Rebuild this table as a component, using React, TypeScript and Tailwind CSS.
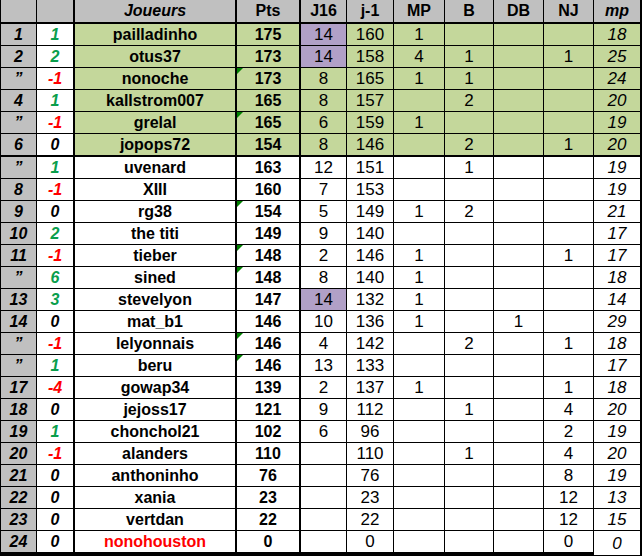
import React from "react";

type Row = {
  rank: string;
  delta: string;
  name: string;
  pts: string;
  j16: string;
  j1: string;
  mpc: string;
  b: string;
  db: string;
  nj: string;
  mp: string;
  purple?: boolean;
  mark?: boolean;
  red?: boolean;
};

const r = (
  rank: string,
  delta: string,
  name: string,
  pts: string,
  j16: string,
  j1: string,
  mpc: string,
  b: string,
  db: string,
  nj: string,
  mp: string,
  extra: Partial<Row> = {}
): Row => ({ rank, delta, name, pts, j16, j1, mpc, b, db, nj, mp, ...extra });

const rows: Row[] = [
  r("1", "1", "pailladinho", "175", "14", "160", "1", "", "", "", "18", { purple: true }),
  r("2", "2", "otus37", "173", "14", "158", "4", "1", "", "1", "25", { purple: true }),
  r("\u201D", "-1", "nonoche", "173", "8", "165", "1", "1", "", "", "24", { mark: true }),
  r("4", "1", "kallstrom007", "165", "8", "157", "", "2", "", "", "20"),
  r("\u201D", "-1", "grelal", "165", "6", "159", "1", "", "", "", "19", { mark: true }),
  r("6", "0", "jopops72", "154", "8", "146", "", "2", "", "1", "20"),
  r("\u201D", "1", "uvenard", "163", "12", "151", "", "1", "", "", "19"),
  r("8", "-1", "XIII", "160", "7", "153", "", "", "", "", "19"),
  r("9", "0", "rg38", "154", "5", "149", "1", "2", "", "", "21", { mark: true }),
  r("10", "2", "the titi", "149", "9", "140", "", "", "", "", "17"),
  r("11", "-1", "tieber", "148", "2", "146", "1", "", "", "1", "17", { mark: true }),
  r("\u201D", "6", "sined", "148", "8", "140", "1", "", "", "", "18", { mark: true }),
  r("13", "3", "stevelyon", "147", "14", "132", "1", "", "", "", "14", { purple: true }),
  r("14", "0", "mat_b1", "146", "10", "136", "1", "", "1", "", "29"),
  r("\u201D", "-1", "lelyonnais", "146", "4", "142", "", "2", "", "1", "18", { mark: true }),
  r("\u201D", "1", "beru", "146", "13", "133", "", "", "", "", "17", { mark: true }),
  r("17", "-4", "gowap34", "139", "2", "137", "1", "", "", "1", "18"),
  r("18", "0", "jejoss17", "121", "9", "112", "", "1", "", "4", "20"),
  r("19", "1", "chonchol21", "102", "6", "96", "", "", "", "2", "19"),
  r("20", "-1", "alanders", "110", "", "110", "", "1", "", "4", "20"),
  r("21", "0", "anthoninho", "76", "", "76", "", "", "", "8", "19"),
  r("22", "0", "xania", "23", "", "23", "", "", "", "12", "13"),
  r("23", "0", "vertdan", "22", "", "22", "", "", "", "12", "15"),
  r("24", "0", "nonohouston", "0", "", "0", "", "", "", "0", "0", { red: true }),
];

const font = { fontFamily: '"Liberation Sans", Arial, sans-serif' };

function deltaColor(d: string) {
  if (d.startsWith("-")) return "text-[#ff0000]";
  if (d === "0") return "text-black";
  return "text-[#0a9e4c]";
}

export default function App() {
  return (
    <div className="w-[642px] h-[557px] bg-white overflow-hidden" style={font}>
      <div className="grid grid-cols-[36px_38px_162px_64px_46px_47px_51px_49px_50px_50px_48px] border-l border-black text-[16px] leading-none text-black">
        {/* header */}
        <div className="h-[24px] bg-[#c0c0c0] border-r border-b-2 border-black" />
        <div className="h-[24px] bg-[#c0c0c0] border-r-2 border-b-2 border-black" />
        <div className="h-[24px] bg-[#c0c0c0] border-r-2 border-b-2 border-black flex items-center justify-center font-bold italic">Joueurs</div>
        <div className="h-[24px] bg-[#c0c0c0] border-r-2 border-b-2 border-black flex items-center justify-center font-bold">Pts</div>
        <div className="h-[24px] bg-[#c0c0c0] border-r border-b-2 border-black flex items-center justify-center font-bold">J16</div>
        <div className="h-[24px] bg-[#c0c0c0] border-r border-b-2 border-black flex items-center justify-center font-bold">j-1</div>
        <div className="h-[24px] bg-[#c0c0c0] border-r border-b-2 border-black flex items-center justify-center font-bold">MP</div>
        <div className="h-[24px] bg-[#c0c0c0] border-r border-b-2 border-black flex items-center justify-center font-bold">B</div>
        <div className="h-[24px] bg-[#c0c0c0] border-r border-b-2 border-black flex items-center justify-center font-bold">DB</div>
        <div className="h-[24px] bg-[#c0c0c0] border-r border-b-2 border-black flex items-center justify-center font-bold">NJ</div>
        <div className="h-[24px] bg-[#c0c0c0] border-r-2 border-b-2 border-black flex items-center justify-center font-bold italic">mp</div>

        {rows.map((row, i) => {
          const top = i < 6;
          const sixth = i === 5;
          const last = i === rows.length - 1;
          const rowH = sixth ? "h-[23px] border-b-2" : last ? "h-[25px] border-b-4" : "h-[22px] border-b";
          const bg = top ? "bg-[#c4d79b]" : "bg-white";
          const base = `${rowH} border-black flex items-center justify-center`;
          const num = "text-[17px]";
          return (
            <React.Fragment key={i}>
              <div className={`${base} border-r bg-[#c0c0c0] font-bold italic`}>{row.rank}</div>
              <div className={`${base} border-r-2 bg-white font-bold italic ${deltaColor(row.delta)}`}>{row.delta}</div>
              <div className={`${base} border-r-2 ${bg} font-bold ${row.red ? "text-[#ff0000]" : ""}`}>{row.name}</div>
              <div className={`${base} border-r-2 ${bg} font-bold relative`}>
                {row.mark && (
                  <span className="absolute top-0 left-0 w-0 h-0 border-t-[6px] border-r-[6px] border-t-[#008000] border-r-transparent" />
                )}
                {row.pts}
              </div>
              <div className={`${base} ${num} border-r ${row.purple ? "bg-[#b1a0c7]" : bg}`}>{row.j16}</div>
              <div className={`${base} ${num} border-r ${bg}`}>{row.j1}</div>
              <div className={`${base} ${num} border-r ${bg}`}>{row.mpc}</div>
              <div className={`${base} ${num} border-r ${bg}`}>{row.b}</div>
              <div className={`${base} ${num} border-r ${bg}`}>{row.db}</div>
              <div className={`${base} ${num} border-r ${bg}`}>{row.nj}</div>
              <div className={`${last ? "h-[25px] border-b" : rowH} ${num} border-black flex items-center justify-center border-r-2 ${bg} italic`}>{row.mp}</div>
            </React.Fragment>
          );
        })}
      </div>
    </div>
  );
}
